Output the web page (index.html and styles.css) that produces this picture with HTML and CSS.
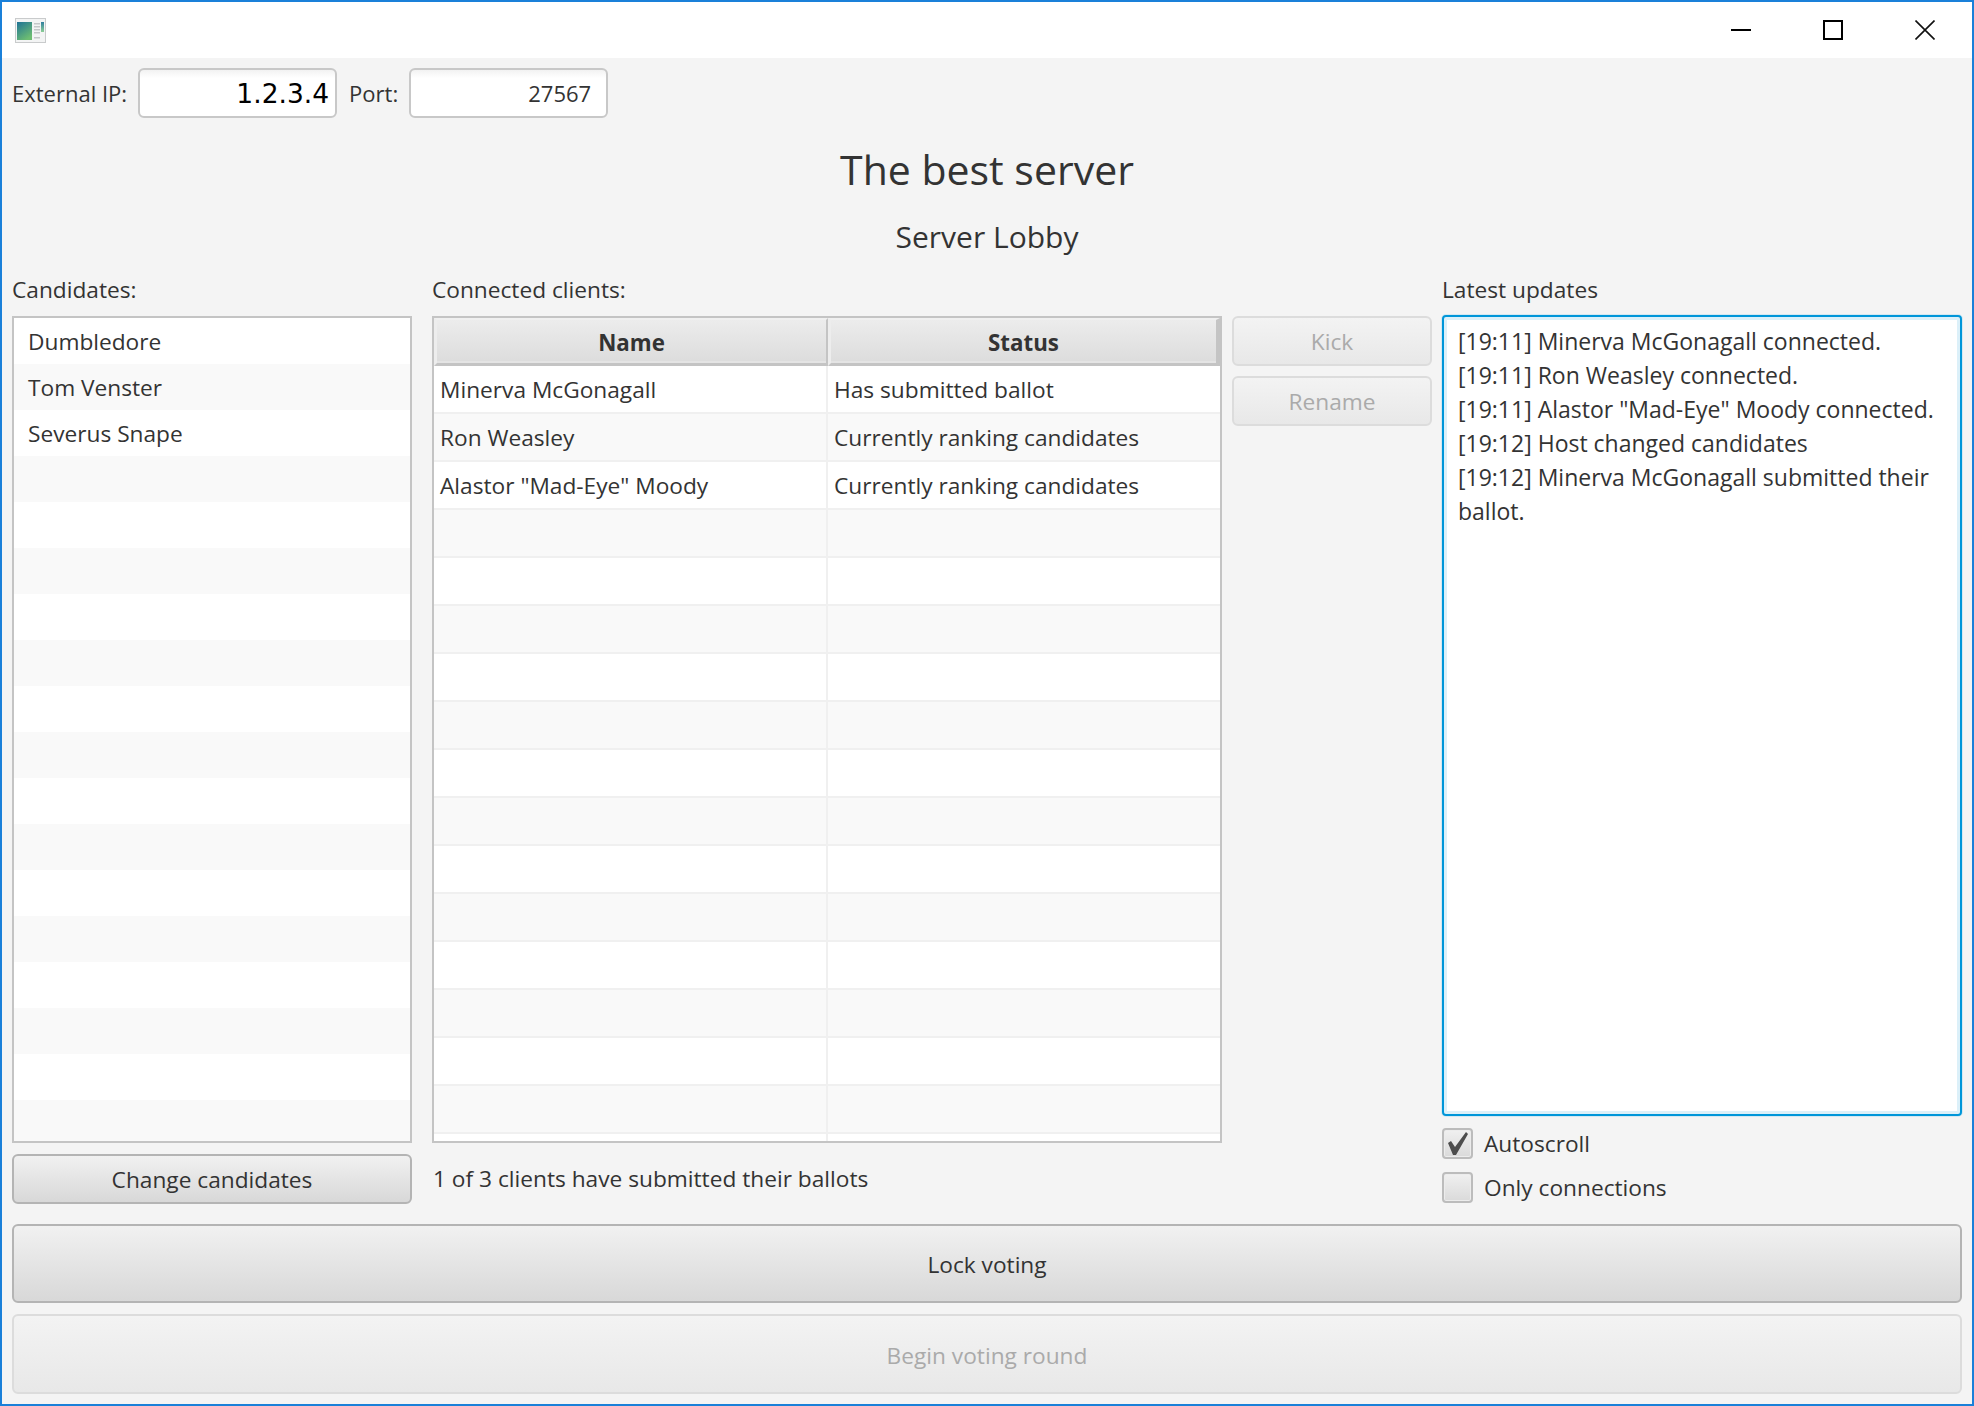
FILE: index.html
```html
<!DOCTYPE html>
<html lang="en">
<head>
    <meta charset="UTF-8">
    <title>Server Lobby</title>
    <link rel="stylesheet" href="styles.css">
</head>
<body>
<div class="window">
    <!-- title bar -->
    <div class="titlebar">
        <svg class="app-icon" width="31" height="25" viewBox="0 0 31 25">
            <defs>
                <linearGradient id="pane" x1="0" y1="0" x2="0.6" y2="1">
                    <stop offset="0" stop-color="#1f7396"/>
                    <stop offset="1" stop-color="#6dbd72"/>
                </linearGradient>
                <linearGradient id="strip" x1="0" y1="0" x2="0" y2="1">
                    <stop offset="0" stop-color="#2f7f9f"/>
                    <stop offset="1" stop-color="#8ccf95"/>
                </linearGradient>
            </defs>
            <rect width="31" height="25" fill="#c9cbcc"/>
            <rect x="1" y="1" width="29" height="23" fill="#f3f4f4"/>
            <rect x="2" y="4" width="15" height="18" fill="url(#pane)"/>
            <rect x="19" y="5" width="6" height="1.5" fill="#c4c7c8"/>
            <rect x="19" y="8" width="6" height="1.5" fill="#c4c7c8"/>
            <rect x="19" y="11" width="6" height="1.5" fill="#c4c7c8"/>
            <rect x="19" y="14" width="6" height="1.5" fill="#c4c7c8"/>
            <rect x="19" y="19" width="6" height="1.5" fill="#c4c7c8"/>
            <rect x="26" y="4" width="3" height="10" fill="url(#strip)"/>
        </svg>
        <div class="win-buttons">
            <div class="win-btn">
                <svg width="20" height="20" viewBox="0 0 20 20"><rect x="0" y="9" width="20" height="2" fill="#000"/></svg>
            </div>
            <div class="win-btn">
                <svg width="20" height="20" viewBox="0 0 20 20"><rect x="1" y="1" width="18" height="18" fill="none" stroke="#000" stroke-width="2"/></svg>
            </div>
            <div class="win-btn">
                <svg width="20" height="20" viewBox="0 0 20 20"><path d="M0.5 0.5 L19.5 19.5 M19.5 0.5 L0.5 19.5" stroke="#111" stroke-width="1.6" fill="none"/></svg>
            </div>
        </div>
    </div>

    <div class="content">
        <!-- address row -->
        <div class="address-row">
            <label class="addr-label">External IP:</label>
            <div class="field field-ip">1.2.3.4</div>
            <label class="addr-label">Port:</label>
            <div class="field">27567</div>
        </div>

        <div class="title">The best server</div>
        <div class="subtitle">Server Lobby</div>

        <div class="main">
            <div class="col col-candidates">
                <div class="col-label">Candidates:</div>
                <ul class="list">
                    <li>Dumbledore</li>
                    <li>Tom Venster</li>
                    <li>Severus Snape</li>
                    <li></li><li></li><li></li><li></li><li></li><li></li>
                    <li></li><li></li><li></li><li></li><li></li><li></li>
                    <li></li><li></li><li></li>
                </ul>
                <button class="btn btn-change">Change candidates</button>
            </div>

            <div class="col col-clients">
                <div class="col-label">Connected clients:</div>
                <div class="table-wrap">
                    <table class="clients">
                        <thead>
                            <tr><th class="name-col">Name</th><th>Status</th></tr>
                        </thead>
                        <tbody>
                            <tr><td>Minerva McGonagall</td><td>Has submitted ballot</td></tr>
                            <tr><td>Ron Weasley</td><td>Currently ranking candidates</td></tr>
                            <tr><td>Alastor "Mad-Eye" Moody</td><td>Currently ranking candidates</td></tr>
                            <tr><td></td><td></td></tr>
                            <tr><td></td><td></td></tr>
                            <tr><td></td><td></td></tr>
                            <tr><td></td><td></td></tr>
                            <tr><td></td><td></td></tr>
                            <tr><td></td><td></td></tr>
                            <tr><td></td><td></td></tr>
                            <tr><td></td><td></td></tr>
                            <tr><td></td><td></td></tr>
                            <tr><td></td><td></td></tr>
                            <tr><td></td><td></td></tr>
                            <tr><td></td><td></td></tr>
                            <tr><td></td><td></td></tr>
                            <tr><td></td><td></td></tr>
                        </tbody>
                    </table>
                </div>
                <div class="ballot-count">1 of 3 clients have submitted their ballots</div>
            </div>

            <div class="col col-actions">
                <button class="btn btn-small" disabled>Kick</button>
                <button class="btn btn-small" disabled>Rename</button>
            </div>

            <div class="col col-updates">
                <div class="col-label">Latest updates</div>
                <div class="log">
                    <div>[19:11] Minerva McGonagall connected.</div>
                    <div>[19:11] Ron Weasley connected.</div>
                    <div>[19:11] Alastor "Mad-Eye" Moody connected.</div>
                    <div>[19:12] Host changed candidates</div>
                    <div>[19:12] Minerva McGonagall submitted their ballot.</div>
                </div>
                <div class="check-row check-first">
                    <span class="check">
                        <svg width="27" height="27" viewBox="0 0 27 27"><polygon points="4,13 7,11 11,17 22,2 24,4 12,25 9,25" fill="#4d4d4d"/></svg>
                    </span>
                    Autoscroll
                </div>
                <div class="check-row">
                    <span class="check"></span>
                    Only connections
                </div>
            </div>
        </div>

        <button class="btn btn-wide btn-lock">Lock voting</button>
        <button class="btn btn-wide btn-begin" disabled>Begin voting round</button>
    </div>
</div>
</body>
</html>
```

FILE: styles.css
```css
* {
    box-sizing: border-box;
}
html, body {
    margin: 0;
    padding: 0;
}
body {
    font-family: "Open Sans", "Noto Sans", sans-serif;
    font-size: 22.7px;
    color: #333;
}
.window {
    width: 1974px;
    height: 1406px;
    border: 2px solid #1a80d9;
    background: #f4f4f4;
    display: flex;
    flex-direction: column;
    overflow: hidden;
}

/* title bar */
.titlebar {
    height: 56px;
    background: #fff;
    display: flex;
    align-items: center;
    justify-content: space-between;
    padding-left: 13px;
    flex: none;
}
.app-icon {
    margin-top: 1px;
}
.win-buttons {
    display: flex;
    margin-right: 1px;
}
.win-btn {
    width: 92px;
    height: 56px;
    display: flex;
    align-items: center;
    justify-content: center;
}

.content {
    flex: 1;
    padding: 10px 10px 10px 10px;
    display: flex;
    flex-direction: column;
}

/* address row */
.address-row {
    display: flex;
    align-items: center;
    height: 50px;
}
.addr-label {
    font-size: 22px;
    margin-right: 11px;
}
.field {
    width: 199px;
    height: 50px;
    margin-right: 12px;
    padding-right: 15px;
    background: linear-gradient(#f2f2f2, #fff 8px);
    border: 2px solid #c8c8c8;
    border-radius: 6px;
    display: flex;
    align-items: center;
    justify-content: flex-end;
    font-size: 22px;
}
.field-ip {
    font-family: "DejaVu Sans", sans-serif;
    font-size: 26.5px;
    color: #000;
    padding-right: 6px;
}

.title {
    margin-top: 23px;
    height: 56px;
    line-height: 56px;
    text-align: center;
    font-size: 41px;
}
.subtitle {
    margin-top: 20px;
    height: 40px;
    line-height: 40px;
    text-align: center;
    font-size: 30px;
}

.main {
    display: flex;
    margin-top: 15px;
}
.col {
    display: flex;
    flex-direction: column;
}
.col-label {
    height: 44px;
    line-height: 36px;
}
.col-candidates {
    width: 400px;
}
.col-clients {
    width: 790px;
    margin-left: 20px;
}
.col-actions {
    width: 200px;
    margin-left: 10px;
    padding-top: 44px;
}
.col-updates {
    width: 520px;
    margin-left: 10px;
}

/* buttons */
.btn {
    font-family: inherit;
    font-size: 22.7px;
    color: #333;
    border: 2px solid #b4b4b4;
    border-radius: 6px;
    background: linear-gradient(#f1f1f1, #d8d8d8);
    padding: 0;
}
.btn:disabled {
    color: #aaa;
    border-color: #dcdcdc;
    background: linear-gradient(#f3f3f3, #e8e8e8);
}
.btn-change {
    height: 50px;
    margin-top: 11px;
}
.btn-small {
    height: 50px;
    margin-bottom: 10px;
}
.btn-wide {
    display: block;
    width: 100%;
    flex: none;
    padding-top: 2px;
}
.btn-lock {
    height: 79px;
    margin-top: 20px;
}
.btn-begin {
    height: 80px;
    margin-top: 11px;
}

/* candidates list */
.list {
    list-style: none;
    margin: 0;
    padding: 0;
    height: 827px;
    background: #fff;
    border: 2px solid #c4c4c4;
    overflow: hidden;
}
.list li {
    height: 46px;
    line-height: 47px;
    padding-left: 14px;
}
.list li:nth-child(even) {
    background: #f9f9f9;
}

/* clients table */
.table-wrap {
    height: 827px;
    background: #fff;
    border: 2px solid #c4c4c4;
    overflow: hidden;
}
.clients {
    width: 100%;
    table-layout: fixed;
    border-collapse: separate;
    border-spacing: 0;
}
.clients th {
    height: 48px;
    padding: 2px 0 0;
    font-size: 22.3px;
    font-weight: bold;
    color: #333;
    background: linear-gradient(#ececec, #dcdcdc);
    border-style: solid;
    border-color: #f0f0f0 #c4c4c4 #c4c4c4 #ededed;
    border-width: 2px 2px 3px 3px;
    box-shadow: inset 0 -2px 0 #e4e4e4;
}
.clients .name-col {
    width: 394px;
}
.clients th:last-child {
    border-right-width: 4px;
}
.clients td {
    height: 48px;
    padding: 1px 6px 0;
    border-bottom: 2px solid #f0f0f0;
    border-right: 2px solid #f0f0f0;
    white-space: nowrap;
}
.clients td:last-child {
    border-right: 0;
}
.clients tbody tr:nth-child(even) td {
    background: #f9f9f9;
}
.ballot-count {
    height: 50px;
    margin-top: 11px;
    line-height: 50px;
    padding-left: 1px;
}

/* log */
.log {
    height: 801px;
    padding: 7px 14px;
    font-size: 23px;
    line-height: 34px;
    background: #fff;
    border: 2px solid #0096d9;
    border-radius: 4px;
    box-shadow: inset 0 0 0 3px #dcf0f9, 0 0 0 1px #d5e9f2;
    margin-top: -1px;
}
.check-row {
    display: flex;
    align-items: center;
    height: 32px;
    margin-top: 12px;
}
.check-first {
    margin-top: 11px;
}
.check {
    width: 31px;
    height: 31px;
    margin-right: 11px;
    border: 2px solid #bcbcbc;
    border-radius: 4px;
    background: linear-gradient(#f0f0f0, #dadada);
    box-shadow: inset 0 0 0 1px #ececec;
    flex: none;
}
.check svg {
    display: block;
}
```
